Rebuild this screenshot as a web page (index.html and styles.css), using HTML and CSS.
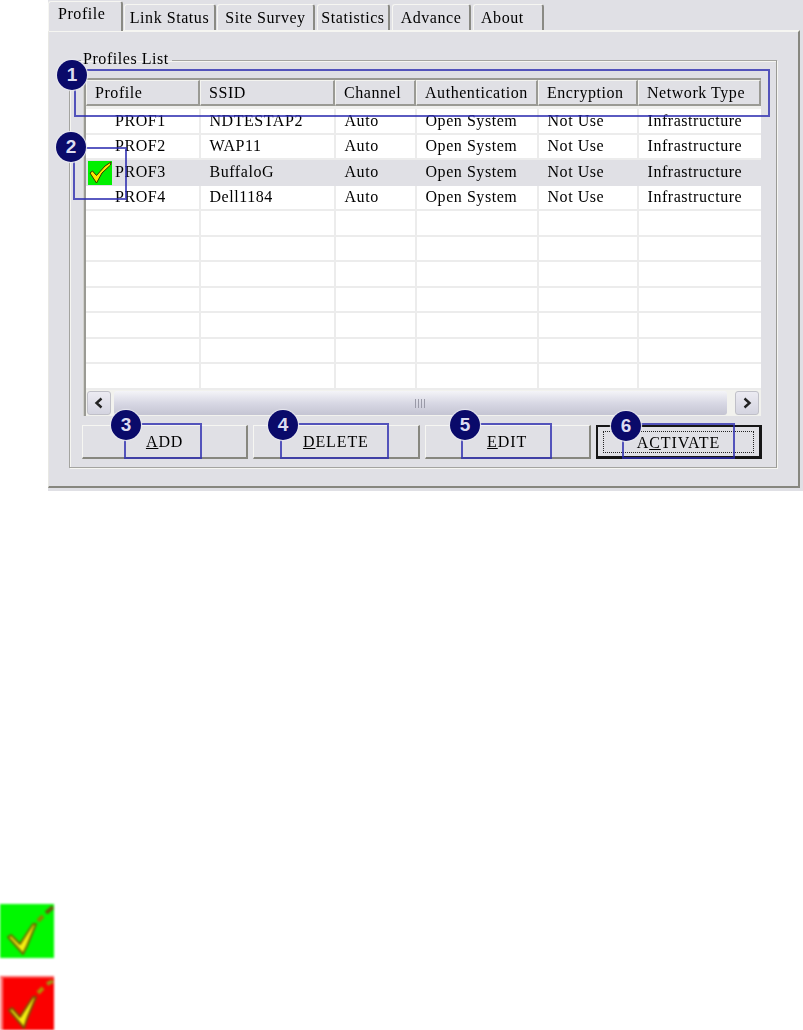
FILE: index.html
```html
<!DOCTYPE html>
<html lang="en">
<head>
<meta charset="utf-8">
<title>Profile</title>
<link rel="stylesheet" href="styles.css">
</head>
<body>
<main class="page">
  <div class="window">
    <nav class="tabs">
      <span class="tab tab-active">Profile</span>
      <span class="tab tab-link">Link Status</span>
      <span class="tab tab-survey">Site Survey</span>
      <span class="tab tab-stats">Statistics</span>
      <span class="tab tab-adv">Advance</span>
      <span class="tab tab-about">About</span>
    </nav>
    <section class="pane">
      <fieldset class="group">
        <legend class="legend">Profiles List</legend>
        <div class="list">
          <div class="row head">
            <span class="hcell">Profile</span><span class="hcell">SSID</span><span class="hcell">Channel</span><span class="hcell">Authentication</span><span class="hcell">Encryption</span><span class="hcell">Network Type</span>
          </div>
          <div class="rows">
            <div class="row"><span class="cell first">PROF1</span><span class="cell">NDTESTAP2</span><span class="cell">Auto</span><span class="cell">Open System</span><span class="cell">Not Use</span><span class="cell">Infrastructure</span></div>
            <div class="row"><span class="cell first">PROF2</span><span class="cell">WAP11</span><span class="cell">Auto</span><span class="cell">Open System</span><span class="cell">Not Use</span><span class="cell">Infrastructure</span></div>
            <div class="row selected"><span class="cell first"><svg class="mini-check" viewBox="0 0 24 24" aria-hidden="true"><rect width="24" height="24" fill="#00f000"/><path d="M2 12 L4.500 10 L8.500 14.500 L17 5 L23 1 L22.500 4 L14 12 L8.500 22 Z" fill="#ffe600" stroke="#3a3000" stroke-width="1" stroke-linejoin="round"/></svg>PROF3</span><span class="cell">BuffaloG</span><span class="cell">Auto</span><span class="cell">Open System</span><span class="cell">Not Use</span><span class="cell">Infrastructure</span></div>
            <div class="row"><span class="cell first">PROF4</span><span class="cell">Dell1184</span><span class="cell">Auto</span><span class="cell">Open System</span><span class="cell">Not Use</span><span class="cell">Infrastructure</span></div>
            <div class="row"><span class="cell"></span><span class="cell"></span><span class="cell"></span><span class="cell"></span><span class="cell"></span><span class="cell"></span></div>
            <div class="row"><span class="cell"></span><span class="cell"></span><span class="cell"></span><span class="cell"></span><span class="cell"></span><span class="cell"></span></div>
            <div class="row"><span class="cell"></span><span class="cell"></span><span class="cell"></span><span class="cell"></span><span class="cell"></span><span class="cell"></span></div>
            <div class="row"><span class="cell"></span><span class="cell"></span><span class="cell"></span><span class="cell"></span><span class="cell"></span><span class="cell"></span></div>
            <div class="row"><span class="cell"></span><span class="cell"></span><span class="cell"></span><span class="cell"></span><span class="cell"></span><span class="cell"></span></div>
            <div class="row"><span class="cell"></span><span class="cell"></span><span class="cell"></span><span class="cell"></span><span class="cell"></span><span class="cell"></span></div>
            <div class="row"><span class="cell"></span><span class="cell"></span><span class="cell"></span><span class="cell"></span><span class="cell"></span><span class="cell"></span></div>
          </div>
          <div class="scrollbar">
            <span class="sb-btn"><svg class="sb-arrow" viewBox="0 0 12 12" aria-hidden="true"><path d="M8.500 1.500 L3.500 6 L8.500 10.500" fill="none" stroke="#222" stroke-width="2.400"/></svg></span>
            <span class="sb-thumb"><span class="grip"></span></span>
            <span class="sb-btn"><svg class="sb-arrow" viewBox="0 0 12 12" aria-hidden="true"><path d="M3.500 1.500 L8.500 6 L3.500 10.500" fill="none" stroke="#222" stroke-width="2.400"/></svg></span>
          </div>
        </div>
        <div class="buttons">
          <button class="btn"><u>A</u>DD</button>
          <button class="btn"><u>D</u>ELETE</button>
          <button class="btn"><u>E</u>DIT</button>
          <button class="btn btn-act"><span class="focus">A<u>C</u>TIVATE</span></button>
        </div>
      </fieldset>
    </section>
  </div>

  <div class="legend-icons">
    <svg class="big-check" viewBox="0 0 54 54" aria-hidden="true"><rect width="54" height="54" fill="#00f800"/><path d="M8 33 L11 31 L20 40 L33 20 L36 20 L27 42 L23 50 Z" fill="#f4ee10" stroke="#6e6a00" stroke-width="2" stroke-linejoin="round"/><path d="M38 17 L43 12" stroke="#8a8a00" stroke-width="4"/><path d="M46 9 L53 3" stroke="#6a5a10" stroke-width="4"/></svg>
    <svg class="big-check" viewBox="0 0 54 54" aria-hidden="true"><rect width="54" height="54" fill="#fb0000"/><rect width="3" height="54" fill="#fb8080"/><rect width="54" height="2" fill="#fb6060"/><path d="M9 34 L12 32 L20 41 L33 21 L36 21 L27 43 L24 52 Z" fill="#f4ee10" stroke="#7a5000" stroke-width="2" stroke-linejoin="round"/><path d="M38 17 L43 12" stroke="#b09000" stroke-width="4"/><path d="M47 8 L53 5" stroke="#a09010" stroke-width="4"/></svg>
  </div>

  <div class="mark box1"></div>
  <div class="mark box2"></div>
  <div class="mark box3"></div>
  <div class="mark box4"></div>
  <div class="mark box5"></div>
  <div class="mark box6"></div>
  <span class="badge b1">1</span>
  <span class="badge b2">2</span>
  <span class="badge b3">3</span>
  <span class="badge b4">4</span>
  <span class="badge b5">5</span>
  <span class="badge b6">6</span>
</main>
</body>
</html>
```
FILE: styles.css
```css
* { box-sizing: border-box; }
html, body { margin: 0; background: #fff; }
.page {
  position: relative;
  width: 803px;
  height: 1030px;
  overflow: hidden;
  font-family: "Liberation Serif", serif;
  font-size: 16px;
  letter-spacing: 0.55px;
  color: #000;
}
.window {
  margin-left: 48px;
  width: 755px;
  height: 491px;
  background: #e0e0e5;
  filter: blur(0.55px);
}
.tabs {
  display: flex;
  height: 30px;
  align-items: flex-end;
}
.tab {
  height: 26px;
  margin-right: 1px;
  padding-top: 3px;
  text-align: center;
  line-height: 20px;
  background: #e0e0e5;
  border: 1px solid #f6f6f2;
  border-bottom: 0;
  border-right: 2px solid #8a8a84;
  border-radius: 3px 3px 0 0;
}
.tab-active {
  width: 75px;
  height: 30px;
  padding-top: 2px;
  position: relative;
  z-index: 1;
  margin-bottom: -1px;
  text-align: left;
  padding-left: 9px;
}
.tab-link { width: 92px; }
.tab-survey { width: 98px; margin-right: 2px; }
.tab-stats { width: 73px; margin-right: 2px; }
.tab-adv { width: 79px; margin-right: 2px; }
.tab-about { width: 71px; text-align: left; padding-left: 7px; }
.pane {
  width: 752px;
  height: 458px;
  padding: 20px 23px 0 20px;
  border-top: 2px solid #f6f6f2;
  border-left: 1px solid #e8e8e4;
  border-right: 2px solid #87877f;
  border-bottom: 2px solid #87877f;
}
.group {
  margin: 0;
  min-width: 0;
  height: 416px;
  width: 708px;
  padding: 9px 15px 0 14px;
  border: 1px solid #a4a4a0;
  border-right-color: #9a9a96;
  box-shadow: 1px 1px 0 #f6f6f2, inset 1px 1px 0 #f6f6f2;
}
.legend {
  position: relative;
  top: -2px;
  margin-left: -3px;
  padding: 0 3px 0 2px;
  line-height: 17px;
}
.list {
  width: 677px;
  border-top: 2px solid #9a9a94;
  border-left: 2px solid #9a9a94;
  box-shadow: -1px 0 0 #d0d0cc;
  background: #fff;
}
.row {
  display: grid;
  grid-template-columns: 114px 135px 81px 122px 100px 123px;
}
.head {
  height: 29px;
  background: #e0e0e5;
  border-bottom: 3px solid #f0f0ee;
}
.hcell {
  height: 26px;
  padding-left: 8px;
  line-height: 24px;
  border: 1px solid #f4f4f0;
  border-right: 2px solid #9a9a94;
  border-bottom: 2px solid #9a9a94;
}
.rows { background: #fff; }
.rows .row { height: 25.55px; grid-template-columns: 115px 135px 81px 122px 100px 122px; }
.cell {
  display: flex;
  align-items: center;
  padding-left: 8.500px;
  border-right: 2px solid #ececec;
  border-bottom: 2px solid #ececec;
  white-space: nowrap;
}
.cell:last-child { border-right: 0; }
.first { padding-left: 29px; position: relative; }
.selected .cell { background: #e0e0e5; border-color: #e0e0e5; }
.mini-check {
  position: absolute;
  left: 2px;
  top: 1px;
  width: 24px;
  height: 24px;
}
.scrollbar {
  display: flex;
  align-items: center;
  gap: 3px;
  height: 26px;
  background: #f2f2ee;
  padding: 1px 2px 1px 1px;
}
.sb-btn {
  width: 24px;
  height: 24px;
  display: flex;
  align-items: center;
  justify-content: center;
  background: linear-gradient(#ecebf2, #d4d4e0);
  border: 1px solid #c0c0c8;
  border-radius: 3px;
}
.sb-arrow { width: 12px; height: 12px; }
.sb-thumb {
  flex: 1;
  height: 24px;
  margin-right: 5px;
  display: flex;
  align-items: center;
  justify-content: center;
  background: linear-gradient(#f4f4f8, #d8d8e4 50%, #c4c4d2);
  border-radius: 3px;
}
.grip {
  width: 12px;
  height: 9px;
  background: repeating-linear-gradient(90deg, #9a9aa8 0 1px, transparent 1px 3px);
}
.buttons {
  display: flex;
  width: 680px;
  margin-top: 9px;
  margin-left: -2px;
  gap: 5px;
}
.btn {
  flex: 0 0 166.250px;
  min-width: 0;
  height: 34px;
  padding: 0;
  font: inherit;
  letter-spacing: 0.9px;
  color: #000;
  background: #e0e0e5;
  border: 1px solid #f6f6f2;
  border-right: 2px solid #87877f;
  border-bottom: 2px solid #87877f;
}
.btn-act {
  padding: 4px 5px 3px 5px;
  border: 2px solid #161616;
  border-right-width: 3px;
  border-bottom-width: 3px;
}
.focus {
  display: block;
  height: 100%;
  line-height: 22px;
  border: 1px dotted #222;
}
.legend-icons {
  display: flex;
  flex-direction: column;
  gap: 18px;
  margin-top: 413px;
  filter: blur(0.8px);
}
.big-check { display: block; width: 54px; height: 54px; }
.mark {
  position: absolute;
  border: 2px solid rgba(44, 44, 176, 0.78);
}
.box1 { left: 74px; top: 69px; width: 696px; height: 48px; }
.box2 { left: 73px; top: 147px; width: 54px; height: 53px; }
.box3 { left: 124px; top: 423px; width: 78px; height: 36px; }
.box4 { left: 280px; top: 423px; width: 109px; height: 36px; }
.box5 { left: 461px; top: 423px; width: 91px; height: 36px; }
.box6 { left: 622px; top: 423px; width: 113px; height: 36px; }
.badge {
  position: absolute;
  width: 30px;
  height: 30px;
  border-radius: 50%;
  background: #0a0a6a;
  color: #dcdcf0;
  font-family: "Liberation Sans", sans-serif;
  font-weight: 700;
  font-size: 19px;
  letter-spacing: 0;
  line-height: 30px;
  text-align: center;
  box-shadow: 0 0 1px 1px #e8e8f0;
}
.b1 { left: 57px; top: 60px; }
.b2 { left: 56px; top: 132px; }
.b3 { left: 111px; top: 410px; }
.b4 { left: 268px; top: 410px; }
.b5 { left: 450px; top: 410px; }
.b6 { left: 611px; top: 411px; }
```
